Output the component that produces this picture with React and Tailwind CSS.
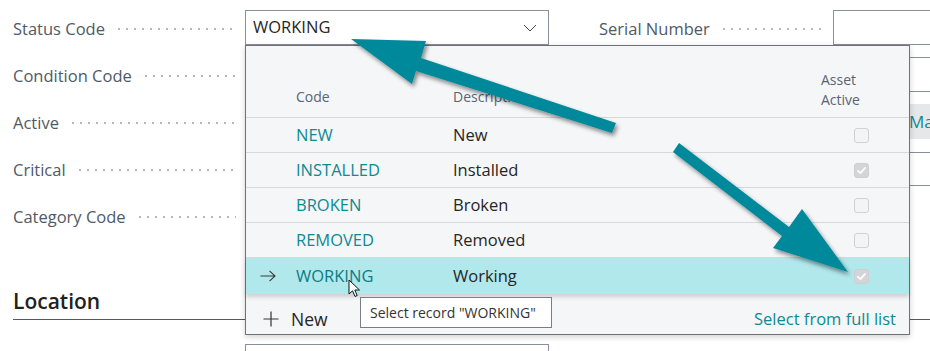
import React from "react";

const dots =
  "flex-1 h-[4px] bg-[radial-gradient(circle,#b4b9c0_1px,transparent_1.4px)] bg-[length:8px_4px] bg-repeat-x";

function FieldRow({ label, children, labelW = "w-[232px]" }) {
  return (
    <div className="flex h-[35px] items-center">
      <div className={`flex ${labelW} items-center pr-[9px] pt-[2px]`}>
        {label ? (
          <>
            <span className="text-[16.5px] leading-[22px] text-[#505a66] whitespace-nowrap">{label}</span>
            <span className={`ml-[10px] ${dots}`} />
          </>
        ) : null}
      </div>
      {children}
    </div>
  );
}

function Checkbox({ checked }) {
  return (
    <div
      className={`ml-[33px] flex h-[15px] w-[15px] items-center justify-center rounded-[3px] border ${
        checked ? "border-[#cdd0d3] bg-[#d3d5d8]" : "border-[#cfd2d5] bg-[#f3f4f5]"
      }`}
    >
      {checked ? (
        <svg width="11" height="11" viewBox="0 0 11 11">
          <polyline points="2,5.8 4.4,8.2 9,3" fill="none" stroke="#ffffff" strokeWidth="1.8" strokeLinecap="round" strokeLinejoin="round" />
        </svg>
      ) : null}
    </div>
  );
}

const rows = [
  { code: "NEW", desc: "New", checked: false },
  { code: "INSTALLED", desc: "Installed", checked: true },
  { code: "BROKEN", desc: "Broken", checked: false },
  { code: "REMOVED", desc: "Removed", checked: false },
];

export default function App() {
  return (
    <div className="relative h-[351px] w-[930px] overflow-hidden bg-white font-['Open_Sans',sans-serif]">
      {/* Form */}
      <div className="flex pl-[13px] pt-[10px]">
        <div className="flex flex-col gap-[12px]">
          <FieldRow label="Status Code">
            <div className="flex h-[35px] w-[304px] items-center justify-between border border-[#8a9099] pl-[7px] pr-[11px]">
              <span className="text-[16.5px] text-[#262626]">WORKING</span>
              <svg width="14" height="8" viewBox="0 0 14 8">
                <polyline points="1,1 7,7 13,1" fill="none" stroke="#4a4a4a" strokeWidth="1" />
              </svg>
            </div>
          </FieldRow>
          <FieldRow label="Condition Code">
            <div className="h-[35px] w-[304px] border border-[#8a9099]" />
          </FieldRow>
          <FieldRow label="Active">
            <div className="h-[35px] w-[304px]" />
          </FieldRow>
          <FieldRow label="Critical">
            <div className="h-[35px] w-[304px]" />
          </FieldRow>
          <FieldRow label="Category Code">
            <div className="h-[35px] w-[304px] border border-[#8a9099]" />
          </FieldRow>
        </div>
        <div className="ml-[50px] flex flex-col gap-[12px]">
          <FieldRow label="Serial Number" labelW="w-[234px]">
            <div className="h-[35px] w-[304px] border border-[#8a9099]" />
          </FieldRow>
          <FieldRow label="" labelW="w-[234px]">
            <div className="h-[35px] w-[304px] border border-[#8a9099]" />
          </FieldRow>
          <FieldRow label="" labelW="w-[234px]">
            <div className="flex h-[35px] w-[304px] items-center bg-[#e6e7e8] pl-[76px] text-[17px] text-[#0e8a91]">
              Manual
            </div>
          </FieldRow>
          <FieldRow label="" labelW="w-[234px]">
            <div className="h-[34px] w-[304px] border border-[#8a9099]" />
          </FieldRow>
        </div>
      </div>

      {/* Location */}
      <div className="ml-[13px] mt-[54px] border-b border-[#505a66] pb-[4px]">
        <div className="text-[21px] font-semibold leading-[28px] text-[#212121]">Location</div>
      </div>
      <div className="ml-[245px] mt-[24px] h-[35px] w-[304px] border border-[#8a9099]" />

      {/* Dropdown */}
      <div className="absolute left-[245px] top-[45px] flex h-[290px] w-[665px] flex-col border border-[#6e7176] bg-[#f5f6f8] shadow-[0_2px_6px_rgba(0,0,0,0.18)]">
        <div className="grid h-[72px] shrink-0 grid-cols-[50px_157px_368px_1fr] border-b border-[#d6d8db] text-[14px] leading-[20px] text-[#5a6473]">
          <div />
          <div className="self-end pb-[10px]">Code</div>
          <div className="self-end pb-[10px]">Description</div>
          <div className="self-end pb-[7px]">
            Asset
            <br />
            Active
          </div>
        </div>
        {rows.map((r) => (
          <div
            key={r.code}
            className="grid h-[35px] shrink-0 grid-cols-[50px_157px_368px_1fr] items-center border-b border-[#d6d8db] pt-[1px] text-[16.5px]"
          >
            <div />
            <div className="text-[#0e8a91]">{r.code}</div>
            <div className="text-[#262626]">{r.desc}</div>
            <Checkbox checked={r.checked} />
          </div>
        ))}
        <div className="relative grid h-[36px] shrink-0 grid-cols-[50px_157px_368px_1fr] items-center bg-[#b1e8eb] text-[16.5px] shadow-[0_3px_4px_rgba(0,0,0,0.16)]">
          <div className="flex pl-[14px]">
            <svg width="16" height="12" viewBox="0 0 16 12">
              <path d="M0.5 6 H15 M9.5 0.8 L15 6 L9.5 11.2" fill="none" stroke="#3a3a3a" strokeWidth="1.1" />
            </svg>
          </div>
          <div className="text-[#0b7d84]">WORKING</div>
          <div className="text-[#262626]">Working</div>
          <Checkbox checked />
        </div>
        <div className="flex flex-1 items-center justify-between pl-[17px] pr-[13px] pt-[10px]">
          <div className="flex items-center gap-[12px] text-[17.5px] text-[#262626]">
            <svg width="16" height="16" viewBox="0 0 16 16">
              <path d="M8 0.5 V15.5 M0.5 8 H15.5" stroke="#333" strokeWidth="1.2" fill="none" />
            </svg>
            New
          </div>
          <div className="text-[16.5px] text-[#0e8a91]">Select from full list</div>
        </div>
      </div>

      {/* Tooltip */}
      <div className="absolute left-[360px] top-[297px] flex h-[31px] w-[192px] items-center border border-[#7b7e83] bg-white pl-[9px] text-[14px] text-[#333]">
        Select record "WORKING"
      </div>

      {/* Cursor */}
      <svg className="absolute left-[348px] top-[279px]" width="14" height="20" viewBox="0 0 14 20">
        <path d="M1 1 L1 15 L4.5 11.8 L7 17.5 L9.2 16.5 L6.8 11 L11.5 11 Z" fill="#ffffff" stroke="#111" strokeWidth="1" strokeLinejoin="round" />
      </svg>

      {/* Annotation arrows */}
      <svg className="absolute left-0 top-0" width="930" height="351" viewBox="0 0 930 351">
        <defs>
          <filter id="sh" x="-20%" y="-20%" width="140%" height="140%">
            <feDropShadow dx="2" dy="3" stdDeviation="2" floodColor="#000" floodOpacity="0.45" />
          </filter>
        </defs>
        <polygon
          filter="url(#sh)"
          fill="#01899a"
          points="351,39 426,41 421,58 616,123 612,133 416,71 412,84"
        />
        <polygon
          filter="url(#sh)"
          fill="#01899a"
          points="679,143 789,227 802,209 848,272 773,248 782,236 673,152"
        />
      </svg>
    </div>
  );
}
